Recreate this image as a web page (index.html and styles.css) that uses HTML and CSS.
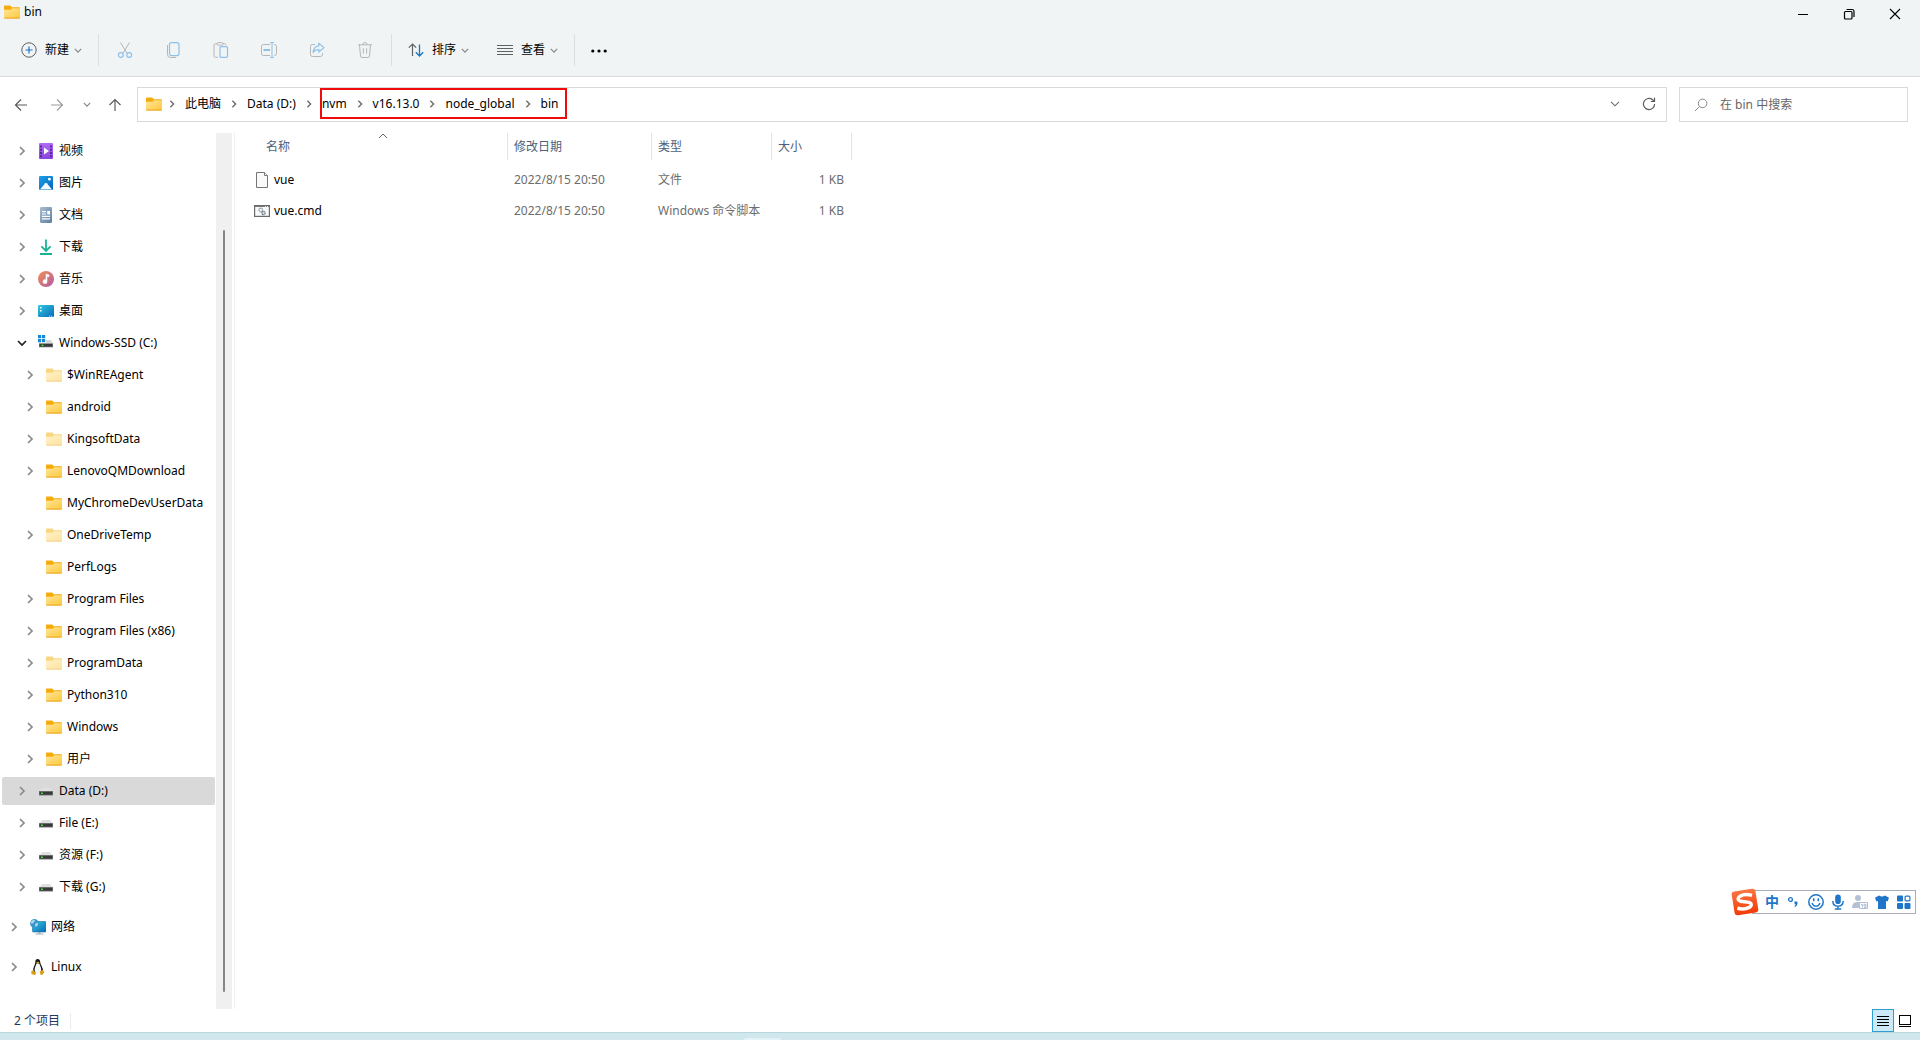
FILE: index.html
```
<!DOCTYPE html>
<html lang="zh-CN">
<head>
<meta charset="utf-8">
<meta name="viewport" content="width=device-width, initial-scale=1">
<title>bin</title>
<link rel="stylesheet" href="styles.css">
</head>
<body>
<svg class="sprite" aria-hidden="true">
  <defs>
    <linearGradient id="g-folder" x1="0" y1="0" x2="1" y2="1"><stop offset="0" stop-color="#ffe69c"/><stop offset="1" stop-color="#fec73a"/></linearGradient>
    <linearGradient id="g-video" x1="0" y1="0" x2="0" y2="1"><stop offset="0" stop-color="#b06af4"/><stop offset="1" stop-color="#8a45dd"/></linearGradient>
    <linearGradient id="g-pic" x1="0" y1="0" x2="1" y2="1"><stop offset="0" stop-color="#1ba0ea"/><stop offset="1" stop-color="#0464b8"/></linearGradient>
    <linearGradient id="g-doc" x1="0" y1="0" x2="1" y2="1"><stop offset="0" stop-color="#a9bdd1"/><stop offset="1" stop-color="#5f7f9f"/></linearGradient>
    <linearGradient id="g-music" x1="0" y1="0" x2="1" y2="1"><stop offset="0" stop-color="#f29052"/><stop offset="1" stop-color="#b05aa4"/></linearGradient>
    <linearGradient id="g-desk" x1="0" y1="0" x2="1" y2="1"><stop offset="0" stop-color="#2fcbe0"/><stop offset="1" stop-color="#0b68b8"/></linearGradient>
    <linearGradient id="g-sogou" x1="0" y1="0" x2="0" y2="1"><stop offset="0" stop-color="#fb7440"/><stop offset="1" stop-color="#f03c08"/></linearGradient>
  </defs>
  <symbol id="folder" viewBox="0 0 16 14"><path d="M0 1.5Q0 .5 1 .5h5.2l1.6 1.7H15q1 0 1 1V6H0z" fill="#f4ac0c"/><path d="M0 4.8h6.6L8.2 3.2H15q1 0 1 1v8.3q0 1-1 1H1q-1 0-1-1z" fill="url(#g-folder)"/><path d="M.3 13.1h15.4" stroke="#e6a118" stroke-width=".9"/></symbol>
  <symbol id="chev" viewBox="0 0 8 10"><path d="M2 1l4 4-4 4" fill="none" stroke="currentColor" stroke-width="1.7"/></symbol>
  <symbol id="down" viewBox="0 0 10 6"><path d="M1 1l4 4 4-4" fill="none" stroke="currentColor" stroke-width="1.5"/></symbol>
  <symbol id="drive" viewBox="0 0 16 16"><path d="M4 5h8l3 4H1z" fill="#dfe0e1"/><path d="M1 8h14v4.500H1z" fill="#77797b"/><path d="M1.6 8.800h12.800v2.900H1.6z" fill="#38393b"/><path d="M3 9.500h1.800v1.400H3z" fill="#3df23a"/></symbol>
  <symbol id="ssd" viewBox="0 0 16 16"><path d="M0 0h3.2v3.2H0zM4 0h3.2v3.2H4zM0 4h3.2v3.2H0zM4 4h3.2v3.2H4z" fill="#1688d8"/><path d="M8 5h5l2 3.5H1L2 8h6z" fill="#d5d7d9"/><path d="M1 8.3h14v4H1z" fill="#77797b"/><path d="M1.6 9h12.8v2.6H1.6z" fill="#38393b"/><path d="M3.6 9.6h1.8V11H3.6z" fill="#3df23a"/></symbol>
  <symbol id="video" viewBox="0 0 16 16"><rect x="1" width="14" height="16" rx="1" fill="url(#g-video)"/><path d="M2 2.5h2v2H2zm0 3.3h2v2H2zm0 3.3h2v2H2zm0 3.2h2v2H2zM12 2.5h2v2h-2zm0 3.3h2v2h-2zm0 3.3h2v2h-2zm0 3.2h2v2h-2z" fill="#5a2a9c"/><path d="M6 4.6l5 3.4-5 3.6z" fill="#fff"/></symbol>
  <symbol id="pic" viewBox="0 0 16 16"><rect x="1" y="1" width="14" height="14" rx="1.2" fill="url(#g-pic)"/><path d="M2 14.5l5.2-6.2q.8-.9 1.6 0l5.2 6.2z" fill="#f4faff"/><circle cx="11.4" cy="4.2" r="1.4" fill="#fff"/></symbol>
  <symbol id="doc" viewBox="0 0 16 16"><rect x="2" width="12" height="16" rx="1.2" fill="url(#g-doc)"/><path d="M4 4h4v1.2H4zm0 2.4h4v1.2H4zM9.2 4H12v3.6H9.2zM4 8.8h8V10H4zm0 2.4h8v1.2H4z" fill="#fff"/></symbol>
  <symbol id="dl" viewBox="0 0 16 16"><path d="M8 .5v11.3M3.4 7.4L8 12l4.6-4.6M2 15h12" fill="none" stroke="#19b394" stroke-width="1.8"/></symbol>
  <symbol id="music" viewBox="0 0 16 16"><circle cx="8" cy="8" r="8" fill="url(#g-music)"/><path d="M8 3l3 1v1.8L9 5.200V10.700a2 2 0 1 1-1-1.800z" fill="#fff" stroke="#fff" stroke-width=".6"/></symbol>
  <symbol id="desk" viewBox="0 0 16 16"><rect y="2" width="16" height="12" rx="1.2" fill="url(#g-desk)"/><path d="M2 4h1.600v1.600H2zM2 7h1.600v1.600H2z" fill="#fff"/><path d="M11 13.200h1.200M13 13.200h1.200" stroke="#cfe8f8"/></symbol>
  <symbol id="net" viewBox="0 0 16 16"><rect x="2.500" y="2.500" width="13.500" height="10.500" rx=".8" fill="url(#g-desk)" stroke="#1b6ca8" stroke-width=".6"/><path d="M8.500 13h2v2h-2zM5.500 14.600h8v1h-8z" fill="#a4adb5"/><circle cx="4.500" cy="4.500" r="4.400" fill="#3a95c9"/><path d="M1 3q2-3 4-2L4 3.500 1.500 5zM5 5l2.600-1.600L8 6 5.500 8z" fill="#a9dcf3"/></symbol>
  <symbol id="tux" viewBox="0 0 16 16"><path d="M5.300 3Q5.300 0 7.700 0t2.500 3q0 2 1.700 4.400 1.800 3 .8 6.100H3.300Q2.500 10 4 7.400 5.300 5 5.300 3z" fill="#17191b"/><path d="M6.500 4.600h2.800q.7 2 1.600 4 1 4-1.300 5.700H6.200Q3.800 12 5 8.600z" fill="#f6f6f6"/><path d="M6.200 3.300q1.600-1 3.200.1L7.800 4.900z" fill="#e8a80c"/><path d="M1.300 12.300l2-1.300 2.700 3.600Q5.600 16.200 3.800 15.800L1.400 15zM14.400 13l-1.600-2.200-2.600 1.500v2.900q1 1.300 2.400.2z" fill="#dba012"/></symbol>
  <symbol id="file" viewBox="0 0 16 16"><path d="M2.500.5h8l3 3v12h-11z" fill="#fafafa" stroke="#757575"/><path d="M10.500.5v3h3" fill="#fff" stroke="#757575"/></symbol>
  <symbol id="cmd" viewBox="0 0 16 16"><rect x=".6" y="2.600" width="14.800" height="10.800" fill="#fafafa" stroke="#6c6c6c" stroke-width="1.200"/><path d="M1 3.400h10M12 3.400h1M14 3.400h1" stroke="#6c6c6c"/><circle cx="6.800" cy="7" r="1.800" fill="none" stroke="#8b9aa8" stroke-width="1.400" stroke-dasharray="1 .4"/><circle cx="9.600" cy="10.200" r="1.500" fill="none" stroke="#5d6c7a" stroke-width="1.200" stroke-dasharray="1 .3"/></symbol>
</svg>

<header class="top">
  <div class="titlebar">
    <h1 class="title"><svg class="folder"><use href="#folder"/></svg>bin</h1>
    <div class="controls">
      <button type="button" aria-label="最小化"><svg viewBox="0 0 12 12"><path d="M1 6.500h10" stroke="#000"/></svg></button>
      <button type="button" aria-label="还原"><svg viewBox="0 0 12 12" fill="none" stroke="#000" stroke-width="1.200"><rect x="1.500" y="3.500" width="7.500" height="7.500" rx="1"/><path d="M3.500 1.500H9q2 0 2 2V9"/></svg></button>
      <button type="button" aria-label="关闭"><svg viewBox="0 0 12 12"><path d="M1 1l10 10M11 1L1 11" stroke="#000" stroke-width="1.100"/></svg></button>
    </div>
  </div>
  <div class="toolbar">
    <button type="button" class="menu"><svg class="i16" viewBox="0 0 16 16" fill="none"><circle cx="8" cy="8" r="7.200" stroke="#5f6163"/><path d="M4.500 8h7M8 4.500v7" stroke="#1976c5" stroke-width="1.200"/></svg><span>新建</span><svg class="dn"><use href="#down"/></svg></button>
    <span class="sep sep-new"></span>
    <button type="button" class="tool" aria-label="剪切" disabled><svg class="i16" viewBox="0 0 16 16" fill="none"><path d="M3.500.5l6.600 11M12.500.5l-6.600 11" stroke="#b4b6b8"/><circle cx="3.800" cy="13" r="2.400" stroke="#8fc0e8" stroke-width="1.200"/><circle cx="12.200" cy="13" r="2.400" stroke="#8fc0e8" stroke-width="1.200"/></svg></button>
    <button type="button" class="tool" aria-label="复制" disabled><svg class="i16" viewBox="0 0 16 16" fill="none"><path d="M2.500 3v9.500q0 3 3 3H11" stroke="#b4b6b8"/><rect x="4.500" y=".6" width="9.500" height="13" rx="2" stroke="#8fc0e8" stroke-width="1.200"/></svg></button>
    <button type="button" class="tool" aria-label="粘贴" disabled><svg class="i16" viewBox="0 0 16 16" fill="none"><path d="M4 1.700H2.500q-1.500 0-1.500 1.500v10.600q0 1.500 1.500 1.500H5M10 1.700h1.500q1.500 0 1.500 1.500" stroke="#b4b6b8"/><rect x="4" y=".6" width="6" height="2.600" rx="1.200" stroke="#b4b6b8"/><rect x="7" y="4.600" width="7.500" height="10.800" rx="1.200" stroke="#8fc0e8" stroke-width="1.200"/></svg></button>
    <button type="button" class="tool" aria-label="重命名" disabled><svg class="i16" viewBox="0 0 16 16" fill="none"><path d="M9 2.500H2.500q-2 0-2 2v7q0 2 2 2H9M13 2.500h.5q2 0 2 2v7q0 2-2 2H13" stroke="#b4b6b8"/><path d="M11 .6v14.800M9 .6h4M9 15.400h4" stroke="#8fc0e8"/><path d="M2.500 8H9" stroke="#8fc0e8" stroke-width="2"/></svg></button>
    <button type="button" class="tool" aria-label="共享" disabled><svg class="i16" viewBox="0 0 16 16" fill="none"><path d="M6 2.500H3.500q-2 0-2 2v8q0 2 2 2h8q2 0 2-2V11" stroke="#b4b6b8"/><path d="M9.800 1.200L15 5.600 9.800 10V7.500Q6 7.400 4.200 10.500 4.500 4.500 9.800 3.800z" stroke="#8fc0e8" stroke-width="1.200" stroke-linejoin="round"/></svg></button>
    <button type="button" class="tool" aria-label="删除" disabled><svg class="i16" viewBox="0 0 16 16" fill="none" stroke="#b4b6b8"><path d="M1 2.800h14M5.800 2.600q.2-2.100 2.200-2.100t2.200 2.100M2.500 3l1 11q.1 1.500 1.600 1.500h5.800q1.500 0 1.600-1.500l1-11M6.400 6.300v5.400M9.600 6.300v5.400"/></svg></button>
    <span class="sep sep-edit"></span>
    <button type="button" class="menu"><svg class="i16" viewBox="0 0 16 16" fill="none"><path d="M4.500 14V2M.8 5.700L4.500 2l3.700 3.700" stroke="#5f6163" stroke-width="1.200"/><path d="M11.500 2.500V14M7.800 10.300l3.700 3.700 3.700-3.700" stroke="#1976c5" stroke-width="1.300"/></svg><span>排序</span><svg class="dn"><use href="#down"/></svg></button>
    <button type="button" class="menu view"><svg class="i16" viewBox="0 0 16 16"><path d="M0 3.500h16M0 6.500h16M0 9.500h16M0 12.500h16" stroke="#5f6163"/></svg><span>查看</span><svg class="dn"><use href="#down"/></svg></button>
    <span class="sep sep-view"></span>
    <button type="button" class="tool" aria-label="更多"><svg class="i16" viewBox="0 0 16 16"><circle cx="1.800" cy="9" r="1.600"/><circle cx="8" cy="9" r="1.600"/><circle cx="14.200" cy="9" r="1.600"/></svg></button>
  </div>
</header>

<div class="navbar">
  <button type="button" class="go" aria-label="后退"><svg class="i14" viewBox="0 0 14 14"><path d="M13 7H1.500M7 1.500L1.500 7 7 12.500"/></svg></button>
  <button type="button" class="go off" aria-label="前进"><svg class="i14" viewBox="0 0 14 14"><path d="M1 7h11.500M7 1.500L12.500 7 7 12.500"/></svg></button>
  <button type="button" class="recent" aria-label="最近的位置"><svg class="dn"><use href="#down"/></svg></button>
  <button type="button" class="up" aria-label="向上"><svg class="i14" viewBox="0 0 14 14"><path d="M7 13V1.500M1.500 7L7 1.500 12.500 7"/></svg></button>
  <div class="address">
    <svg class="folder"><use href="#folder"/></svg>
    <nav class="crumbs" aria-label="路径">
      <svg class="cv"><use href="#chev"/></svg><a href="#pc">此电脑</a>
      <svg class="cv"><use href="#chev"/></svg><a href="#d">Data (D:)</a>
      <svg class="cv"><use href="#chev"/></svg>
      <span class="marked"><a href="#nvm">nvm</a><svg class="cv"><use href="#chev"/></svg><a href="#v">v16.13.0</a><svg class="cv"><use href="#chev"/></svg><a href="#global">node_global</a><svg class="cv"><use href="#chev"/></svg><a href="#bin">bin</a></span>
    </nav>
    <button type="button" class="in-box" aria-label="历史记录"><svg class="big" viewBox="0 0 10 6"><path d="M1 .8l4 4 4-4" fill="none" stroke="#6a6a6a" stroke-width="1.100"/></svg></button>
    <button type="button" class="in-box" aria-label="刷新"><svg class="i14" viewBox="0 0 14 14"><path d="M12.600 7A5.600 5.600 0 1 1 10.600 2.700L12.300 4.300M12.500.8v3.700H8.800"/></svg></button>
  </div>
  <label class="search">
    <svg class="i14" viewBox="0 0 14 14"><circle cx="8.600" cy="5.400" r="4.300"/><path d="M5.500 8.500L1 13"/></svg>
    <input type="search" placeholder="在 bin 中搜索" aria-label="在 bin 中搜索">
  </label>
</div>

<div class="body">
  <nav class="side" aria-label="导航窗格">
    <ul class="tree">
      <li><button type="button" class="l1"><svg class="cv"><use href="#chev"/></svg><svg class="i16"><use href="#video"/></svg>视频</button></li>
      <li><button type="button" class="l1"><svg class="cv"><use href="#chev"/></svg><svg class="i16"><use href="#pic"/></svg>图片</button></li>
      <li><button type="button" class="l1"><svg class="cv"><use href="#chev"/></svg><svg class="i16"><use href="#doc"/></svg>文档</button></li>
      <li><button type="button" class="l1"><svg class="cv"><use href="#chev"/></svg><svg class="i16"><use href="#dl"/></svg>下载</button></li>
      <li><button type="button" class="l1"><svg class="cv"><use href="#chev"/></svg><svg class="i16"><use href="#music"/></svg>音乐</button></li>
      <li><button type="button" class="l1"><svg class="cv"><use href="#chev"/></svg><svg class="i16"><use href="#desk"/></svg>桌面</button></li>
      <li><button type="button" class="l1 open" aria-expanded="true"><svg class="cv"><use href="#chev"/></svg><svg class="i16"><use href="#ssd"/></svg>Windows-SSD (C:)</button></li>
      <li><button type="button" class="l2 faint"><svg class="cv"><use href="#chev"/></svg><svg class="folder"><use href="#folder"/></svg>$WinREAgent</button></li>
      <li><button type="button" class="l2"><svg class="cv"><use href="#chev"/></svg><svg class="folder"><use href="#folder"/></svg>android</button></li>
      <li><button type="button" class="l2 faint"><svg class="cv"><use href="#chev"/></svg><svg class="folder"><use href="#folder"/></svg>KingsoftData</button></li>
      <li><button type="button" class="l2"><svg class="cv"><use href="#chev"/></svg><svg class="folder"><use href="#folder"/></svg>LenovoQMDownload</button></li>
      <li><button type="button" class="l2"><svg class="cv"></svg><svg class="folder"><use href="#folder"/></svg>MyChromeDevUserData</button></li>
      <li><button type="button" class="l2 faint"><svg class="cv"><use href="#chev"/></svg><svg class="folder"><use href="#folder"/></svg>OneDriveTemp</button></li>
      <li><button type="button" class="l2"><svg class="cv"></svg><svg class="folder"><use href="#folder"/></svg>PerfLogs</button></li>
      <li><button type="button" class="l2"><svg class="cv"><use href="#chev"/></svg><svg class="folder"><use href="#folder"/></svg>Program Files</button></li>
      <li><button type="button" class="l2"><svg class="cv"><use href="#chev"/></svg><svg class="folder"><use href="#folder"/></svg>Program Files (x86)</button></li>
      <li><button type="button" class="l2 faint"><svg class="cv"><use href="#chev"/></svg><svg class="folder"><use href="#folder"/></svg>ProgramData</button></li>
      <li><button type="button" class="l2"><svg class="cv"><use href="#chev"/></svg><svg class="folder"><use href="#folder"/></svg>Python310</button></li>
      <li><button type="button" class="l2"><svg class="cv"><use href="#chev"/></svg><svg class="folder"><use href="#folder"/></svg>Windows</button></li>
      <li><button type="button" class="l2"><svg class="cv"><use href="#chev"/></svg><svg class="folder"><use href="#folder"/></svg>用户</button></li>
      <li><button type="button" class="l1 current" aria-current="true"><svg class="cv"><use href="#chev"/></svg><svg class="i16"><use href="#drive"/></svg>Data (D:)</button></li>
      <li><button type="button" class="l1"><svg class="cv"><use href="#chev"/></svg><svg class="i16"><use href="#drive"/></svg>File (E:)</button></li>
      <li><button type="button" class="l1"><svg class="cv"><use href="#chev"/></svg><svg class="i16"><use href="#drive"/></svg>资源 (F:)</button></li>
      <li><button type="button" class="l1"><svg class="cv"><use href="#chev"/></svg><svg class="i16"><use href="#drive"/></svg>下载 (G:)</button></li>
      <li class="root"><button type="button"><svg class="cv"><use href="#chev"/></svg><svg class="i16"><use href="#net"/></svg>网络</button></li>
      <li class="root"><button type="button"><svg class="cv"><use href="#chev"/></svg><svg class="i16"><use href="#tux"/></svg>Linux</button></li>
    </ul>
    <div class="track"><div class="thumb"></div></div>
  </nav>
  <main class="files">
    <table>
      <colgroup><col class="c-name"><col class="c-date"><col class="c-type"><col class="c-size"></colgroup>
      <thead>
        <tr>
          <th scope="col" aria-sort="ascending"><button type="button" class="first">名称<svg class="sorted" viewBox="0 0 10 6"><path d="M1 5l4-4 4 4" fill="none" stroke="#666"/></svg></button></th>
          <th scope="col"><button type="button">修改日期</button></th>
          <th scope="col"><button type="button">类型</button></th>
          <th scope="col"><button type="button">大小</button></th>
        </tr>
      </thead>
      <tbody>
        <tr><td class="name"><div><svg class="i16"><use href="#file"/></svg>vue</div></td><td>2022/8/15 20:50</td><td>文件</td><td class="size">1 KB</td></tr>
        <tr><td class="name"><div><svg class="i16"><use href="#cmd"/></svg>vue.cmd</div></td><td>2022/8/15 20:50</td><td>Windows 命令脚本</td><td class="size">1 KB</td></tr>
      </tbody>
    </table>
  </main>
</div>

<footer class="status">
  <span class="count">2 个项目</span>
  <button type="button" class="mode on" aria-label="详细信息"><svg viewBox="0 0 14 14"><path d="M1 2.500h12M1 5.500h12M1 8.500h12M1 11.500h12" stroke="#000"/></svg></button>
  <button type="button" class="mode" aria-label="大缩略图"><svg viewBox="0 0 14 14" fill="none" stroke="#000"><rect x="1.500" y="1.500" width="11" height="9"/><path d="M1 12.500h12"/></svg></button>
</footer>
<div class="desktop"><div class="task"></div></div>

<div class="ime">
  <svg class="logo" viewBox="0 0 30 30"><g transform="rotate(-9 15 15)"><rect x="3" y="3" width="24" height="24" rx="3" fill="url(#g-sogou)"/><path d="M23 9.500Q16 6.500 11 8.500 6.500 11 10.500 13.500L19 16q4 2.500-.5 5-5.500 1.800-12-1" fill="none" stroke="#fff" stroke-width="3.400"/></g></svg>
  <div class="ime-bar">
    <button type="button" class="zh">中</button>
    <button type="button" aria-label="标点"><svg viewBox="0 0 16 16"><circle cx="4.500" cy="5.500" r="1.900" fill="none" stroke="#1f76c8" stroke-width="1.300"/><path d="M8.500 7.600h2.800q1 3.600-2.300 5.400l-.6-.7q1.300-1 1.200-2H8.500z" fill="#1f76c8"/></svg></button>
    <button type="button" aria-label="表情"><svg viewBox="0 0 16 16" fill="none" stroke="#1f76c8"><circle cx="8" cy="8" r="7.200" stroke-width="1.500"/><path d="M5.700 4.200v3M10.300 4.200v3" stroke-width="1.600"/><path d="M4 9q1 3.200 4 3.200T12 9" stroke-width="1.300"/></svg></button>
    <button type="button" aria-label="语音"><svg viewBox="0 0 16 16" fill="none" stroke="#1f76c8"><rect x="5.200" y=".4" width="5.600" height="9.600" rx="2.800" fill="#1f76c8" stroke="none"/><path d="M2.800 7q.2 5.200 5.200 5.200T13.200 7M8 12v3.500M4.800 15h6.400" stroke-width="1.500"/></svg></button>
    <button type="button" aria-label="账户"><svg viewBox="0 0 16 16" fill="#b3c0d6"><circle cx="6" cy="4" r="3"/><path d="M0 14q0-6 5-6h3q2 0 3 1H7v5z"/><path d="M7.500 8.500h8v6h-8zM9 10.500h1.500v3M14 12h-2v-1.700h2v3.200h-2" fill="#fff" stroke="#b3c0d6"/></svg></button>
    <button type="button" aria-label="皮肤"><svg viewBox="0 0 16 16"><path d="M5 1.500q3 2.200 6 0l4 2.300-1.400 3.600-1.600-.4V15H4V7l-1.600.4L1 3.800z" fill="#1f76c8"/></svg></button>
    <button type="button" aria-label="工具箱"><svg viewBox="0 0 16 16" fill="#1f76c8"><rect x="1" y="1.500" width="6" height="6" rx="1"/><rect x="1" y="9" width="6" height="6" rx="1"/><rect x="8.500" y="9" width="6" height="6" rx="1"/><rect x="9.100" y="2.100" width="4.800" height="4.800" rx="1" fill="none" stroke="#1f76c8" stroke-width="1.200"/></svg></button>
  </div>
</div>
</body>
</html>
```
FILE: styles.css
```
* { box-sizing: border-box; }
body {
  margin: 0;
  min-height: 100vh;
  display: flex;
  flex-direction: column;
  background: #fff;
  color: #000;
  font: 12px/16px "Noto Sans", "Noto Sans CJK SC", sans-serif;
}
button {
  display: flex;
  align-items: center;
  justify-content: center;
  padding: 0;
  border: 0;
  background: none;
  color: inherit;
  font: inherit;
}
svg { display: block; flex: none; }
.sprite { position: absolute; width: 0; height: 0; }
.folder { width: 16px; height: 14px; }
.i16 { width: 16px; height: 16px; }
.i14 { width: 14px; height: 14px; fill: none; stroke: #5c5c5c; stroke-width: 1.2; }
.cv { width: 8px; height: 10px; color: #8a8a8a; }
.dn { width: 8px; height: 5px; color: #85878a; }

/* title bar and command bar */
.top { background: #f0f4f5; border-bottom: 1px solid #d9dcdd; padding-bottom: 4px; }
.titlebar { display: flex; justify-content: space-between; height: 28px; }
.title { display: flex; gap: 4px; align-items: center; margin: 0; padding-left: 4px; height: 23px; font-size: 12px; font-weight: 400; }
.controls { display: flex; padding-right: 2px; }
.controls button { width: 46px; height: 28px; }
.controls svg { width: 12px; height: 12px; }
.toolbar { display: flex; align-items: center; height: 44px; padding-left: 21px; }
.menu { height: 32px; gap: 8px; }
.menu .dn { margin-left: -3px; }
.view { margin-left: 28px; }
.tool { width: 48px; height: 32px; }
.sep { width: 1px; height: 32px; background: #dcdfe0; }
.sep-new { margin: 0 2px 0 16px; }
.sep-edit { margin: 0 16px 0 2px; }
.sep-view { margin-left: 16px; }

/* navigation and address */
.navbar { display: flex; padding: 10px 12px 11px 3px; }
.go { width: 36px; height: 35px; }
.off .i14 { stroke: #9c9c9c; }
.recent { width: 24px; height: 35px; }
.up { width: 32px; height: 35px; margin-right: 6px; }
.address { flex: 1; display: flex; align-items: center; height: 35px; border: 1px solid #d9d9d9; padding: 0 0 2px 8px; }
.crumbs { flex: 1; display: flex; align-items: center; padding-left: 1px; }
.crumbs a { padding: 0 4px; color: #000; text-decoration: none; }
.crumbs .cv { width: 18px; height: 8px; color: #6a6a6a; }
.marked { position: relative; display: flex; align-items: center; }
.marked::after { content: ""; position: absolute; inset: -8px -5px -7px 2px; border: 2px solid #f00c0c; }
.in-box { width: 34px; height: 33px; }
.big { width: 10px; height: 6px; }
.search { display: flex; align-items: center; gap: 12px; width: 229px; height: 35px; margin-left: 12px; padding-left: 14px; border: 1px solid #d9d9d9; }
.search .i14 { stroke: #8a8a8a; stroke-width: 1; }
.search input { flex: 1; min-width: 0; border: 0; outline: 0; padding: 0; background: none; font: inherit; }
.search input::placeholder { color: #666; opacity: 1; }

/* folder tree */
.body { flex: 1; display: flex; }
.side { display: flex; border-right: 1px solid #f0f0f0; padding-right: 2px; }
.tree { width: 216px; margin: 0; padding: 2px 0 0; list-style: none; }
.tree li { padding: 2px 1px 2px 2px; }
.tree .root { margin-top: 8px; }
.tree button { width: 100%; height: 28px; justify-content: flex-start; padding-left: 8px; border-radius: 2px; white-space: nowrap; }
.tree .l1 { padding-left: 16px; }
.tree .l2 { padding-left: 24px; }
.tree .cv { margin-right: 12px; }
.tree .i16, .tree .folder { margin-right: 5px; }
.tree .current { background: #d9d9d9; }
.faint .folder { opacity: 0.5; }
.open .cv { transform: rotate(90deg); color: #222; }
.track { display: flex; width: 16px; padding: 97px 7px 17px; background: #f0f0f0; }
.thumb { flex: 1; background: #868686; border-radius: 1px; }

/* file list */
.files { flex: 1; padding-left: 1px; }
table { width: 616px; table-layout: fixed; border-collapse: collapse; }
.c-name { width: 272px; }
.c-date { width: 144px; }
.c-type { width: 120px; }
.c-size { width: 80px; }
th { height: 31px; padding: 0; vertical-align: top; font-weight: 400; }
th button { position: relative; width: 100%; height: 27px; justify-content: flex-start; padding-left: 6px; border-right: 1px solid #e3e3e3; color: #4c607a; }
th .first { padding-left: 30px; }
.sorted { position: absolute; top: 0; left: 142px; width: 10px; height: 6px; }
td { height: 31px; padding: 0 6px; color: #6d6d6d; white-space: nowrap; }
td.name { padding-left: 18px; color: #000; }
.name div { display: flex; align-items: center; gap: 4px; }
td.size { padding-right: 8px; text-align: right; }

/* status bar */
.status { display: flex; align-items: center; height: 23px; padding-right: 4px; color: #1e395b; }
.count { margin-right: auto; padding: 0 10px 0 14px; border-right: 1px solid #ececec; }
.mode { width: 22px; height: 23px; }
.mode svg { width: 14px; height: 14px; }
.on { border: 1px solid #2f9ed3; background: #cde8f6; }
.desktop { height: 8px; padding: 5px 0 0 743px; background: #cfe7ed; border-top: 1px solid #b9d6de; overflow: hidden; }
.task { width: 39px; height: 8px; border-radius: 4px 4px 0 0; background: #e6f3f6; }

/* floating input-method bar */
.ime { position: fixed; right: 4px; bottom: 123px; display: flex; align-items: center; }
.logo { width: 30px; height: 30px; margin-right: -8px; z-index: 1; }
.ime-bar { display: flex; align-items: center; height: 24px; padding: 0 0 0 8px; border: 1px solid #a9adb8; background: #fff; }
.ime-bar button { width: 22px; height: 22px; }
.ime-bar svg { width: 16px; height: 16px; }
.ime-bar .zh { color: #1f76c8; font-size: 14px; font-weight: 700; }
```
